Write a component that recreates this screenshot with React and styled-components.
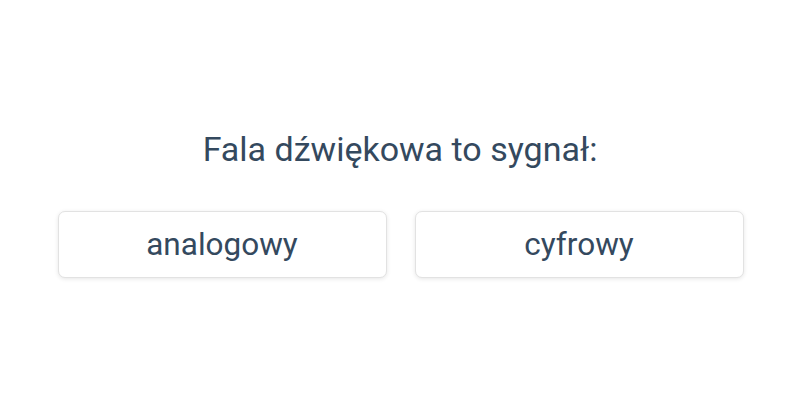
import React from "react"
import styled, { createGlobalStyle } from "styled-components"

const Global = createGlobalStyle`
	html, body {
		margin: 0;
		padding: 0;
		background: #ffffff;
	}
	body {
		font-family: Roboto, "Liberation Sans", sans-serif;
	}
`

const Page = styled.div`
	width: 800px;
	height: 400px;
	display: flex;
	flex-direction: column;
	align-items: center;
	gap: 41px;
	padding-top: 129px;
	box-sizing: border-box;
	color: #34495e;
`

const Question = styled.h1`
	margin: 0;
	font-size: 34px;
	font-weight: 400;
	line-height: 1.2;
`

const Answers = styled.div`
	display: grid;
	grid-template-columns: 329px 329px;
	gap: 28px;
	margin-left: 1px;
`

const Answer = styled.button`
	height: 67px;
	background: #ffffff;
	border: 1px solid #e2e2e2;
	border-radius: 7px;
	box-shadow: 0 1px 4px rgba(0, 0, 0, 0.1);
	font-family: inherit;
	font-size: 31.5px;
	color: #34495e;
	cursor: pointer;
`

export default function App() {
	const answers = ["analogowy", "cyfrowy"]
	return (
		<>
			<Global />
			<Page>
				<Question>Fala dźwiękowa to sygnał:</Question>
				<Answers>
					{answers.map(a => (
						<Answer key={a}>{a}</Answer>
					))}
				</Answers>
			</Page>
		</>
	)
}
